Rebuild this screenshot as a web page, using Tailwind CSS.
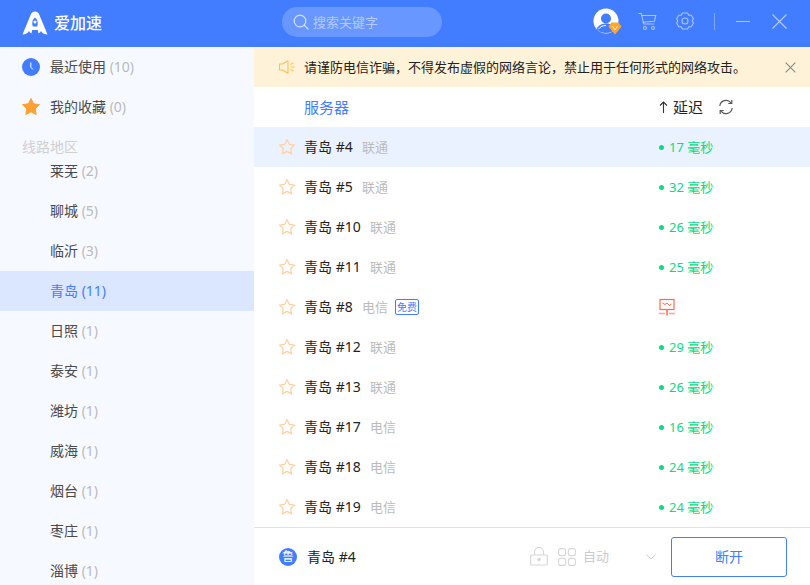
<!doctype html>
<html lang="zh"><head><meta charset="utf-8"><script src="https://cdn.jsdelivr.net/npm/@tailwindcss/browser@4"></script><title>爱加速</title></head>
<body class="w-[810px] h-[585px] overflow-hidden bg-white font-['Noto_Sans','Noto_Sans_CJK_SC',sans-serif] text-[14px] leading-none text-[#222]">
<svg class="hidden"><defs>
<symbol id="star" viewBox="0 0 18 18"><path d="M9 1.6l2.3 4.8 5.2.7-3.8 3.6.9 5.2L9 13.4l-4.6 2.5.9-5.2L1.500 7.100l5.200-.7z" fill="none" stroke="#ffd0a0" stroke-width="1.200" stroke-linejoin="round"/></symbol>
</defs></svg>
<header class="h-[47px] bg-[#437dff] flex items-center pb-[3px]">
  <div class="w-[282px] flex items-center pl-[22px] shrink-0 mt-[2px]">
    <svg width="26" height="24" viewBox="0 0 26 24"><path d="M13 .5c2 0 3.400 1 4.200 3L25.500 23.500c-2.500 0-5-.8-6.500-3.500-.5 1.200-1.500 2-2.500 2.300L15.800 19h-5.600l-.7 3.300c-1-.3-2-1.100-2.500-2.300-1.500 2.700-4 3.500-6.500 3.500L8.800 3.500C9.600 1.500 11 .5 13 .5z" fill="#fff"/><path d="M13 6.500c1.800 1.300 2.800 3.500 2.800 6.500l-.6 2.500h-4.400l-.6-2.500c0-3 1-5.200 2.800-6.500z" fill="#437dff"/><circle cx="13" cy="11" r="1.500" fill="#fff"/></svg>
    <span class="ml-[6px] text-[16px] font-medium text-white">爱加速</span>
  </div>
  <div class="w-[160px] h-[30px] rounded-full bg-white/20 flex items-center pl-[11px] shrink-0">
    <svg width="16" height="16" viewBox="0 0 16 16" fill="none" stroke="#fff" stroke-opacity=".7" stroke-width="1.200"><circle cx="7" cy="7" r="5.800"/><path d="M11.200 11.200l3.800 3.800" stroke-linecap="round"/></svg>
    <span class="ml-[4px] text-[13px] text-white/50">搜索关键字</span>
  </div>
  <div class="ml-[151px] w-[26px] h-[26px] relative shrink-0 -mt-[2px]">
    <svg width="26" height="26" viewBox="0 0 26 26"><circle cx="13" cy="13" r="12.500" fill="#fff"/><circle cx="13" cy="10.500" r="5" fill="#437dff"/><path d="M3.500 21c2-4 5.500-5.500 9.500-5.500s7.500 1.500 9.500 5.500c-2.300 2.600-5.600 4-9.500 4s-7.200-1.400-9.500-4z" fill="#437dff"/><path d="M5.500 21.300c1.700-2.700 4.300-3.800 7.500-3.800" stroke="#fff" fill="none"/></svg>
    <svg class="absolute left-[15px] top-[14px]" width="14" height="13" viewBox="0 0 14 13"><path d="M3.500.5h7l3 4-6.500 8-6.500-8z" fill="#ffa62b"/><path d="M4.500 4l2.500 4 2.500-4" fill="none" stroke="#fff" stroke-opacity=".7"/></svg>
  </div>
  <svg class="ml-[19px] shrink-0 -mt-[2px]" width="19" height="19" viewBox="0 0 19 19" fill="none" stroke="#fff" stroke-opacity=".55" stroke-width="1.100"><path d="M.5 1.500h2.800l2.400 10.500h10.600"/><path d="M3.800 3.500h14l-1.500 5.800-11.200 1"/><circle cx="7" cy="16" r="1.500"/><circle cx="15" cy="16" r="1.500"/></svg>
  <svg class="ml-[19px] shrink-0 -mt-[2px]" width="18" height="18" viewBox="0 0 18 18" fill="none" stroke="#fff" stroke-opacity=".55" stroke-width="1.100"><path d="M6.500 1h5l1.300 2.100 2.400.2 2.200 3.500-1.200 2.200 1.200 2.200-2.200 3.500-2.400.2L11.500 17h-5l-1.300-2.100-2.400-.2L.6 11.200l1.200-2.200L.6 6.800l2.200-3.500 2.400-.2z" stroke-linejoin="round"/><circle cx="9" cy="9" r="3"/></svg>
  <div class="ml-[20px] w-px h-[17px] bg-white/35 shrink-0 -mt-[2px]"></div>
  <div class="ml-[21px] w-[14px] h-px bg-white/55 shrink-0 -mt-[2px]"></div>
  <svg class="ml-[22px] shrink-0 -mt-[2px]" width="15" height="15" viewBox="0 0 15 15" stroke="#fff" stroke-opacity=".6" stroke-width="1.100"><path d="M.5.500l14 14M14.500.500l-14 14"/></svg>
</header>
<div class="flex h-[538px]">
  <aside class="w-[254px] shrink-0 bg-[#f6f9ff] flex flex-col overflow-hidden text-[#4a4a4a]">
    <div class="h-[40px] shrink-0 flex items-center pl-[22px]">
      <svg width="18" height="18" viewBox="0 0 18 18"><circle cx="9" cy="9" r="9" fill="#437dff"/><path d="M8.800 4.500v4.800l2 2" fill="none" stroke="#fff"/></svg>
      <span class="ml-[10px]">最近使用 <span class="text-[#bbb]">(10)</span></span>
    </div>
    <div class="h-[40px] shrink-0 flex items-center pl-[22px]">
      <svg width="18" height="18" viewBox="0 0 18 18"><path d="M9 .500l2.600 5.300 5.900.8-4.300 4.100 1 5.800L9 13.800l-5.200 2.700 1-5.800L.500 6.600l5.900-.8z" fill="#ffa033" stroke="#ffa033" stroke-linejoin="round"/></svg>
      <span class="ml-[10px]">我的收藏 <span class="text-[#bbb]">(0)</span></span>
    </div>
    <div class="h-[38px] shrink-0 flex items-center pl-[22px] pt-[2px] text-[#d0d0d0]">线路地区</div>
    <div class="flex-1 overflow-hidden">
      <div class="-mt-[14px]">
      <div class="h-[40px] flex items-center pl-[50px]">莱芜&nbsp;<span class="text-[#bbb]">(2)</span></div>
      <div class="h-[40px] flex items-center pl-[50px]">聊城&nbsp;<span class="text-[#bbb]">(5)</span></div>
      <div class="h-[40px] flex items-center pl-[50px]">临沂&nbsp;<span class="text-[#bbb]">(3)</span></div>
      <div class="h-[40px] flex items-center pl-[50px] bg-[#dbe6ff] text-[#437dff]">青岛&nbsp;<span>(11)</span></div>
      <div class="h-[40px] flex items-center pl-[50px]">日照&nbsp;<span class="text-[#bbb]">(1)</span></div>
      <div class="h-[40px] flex items-center pl-[50px]">泰安&nbsp;<span class="text-[#bbb]">(1)</span></div>
      <div class="h-[40px] flex items-center pl-[50px]">潍坊&nbsp;<span class="text-[#bbb]">(1)</span></div>
      <div class="h-[40px] flex items-center pl-[50px]">威海&nbsp;<span class="text-[#bbb]">(1)</span></div>
      <div class="h-[40px] flex items-center pl-[50px]">烟台&nbsp;<span class="text-[#bbb]">(1)</span></div>
      <div class="h-[40px] flex items-center pl-[50px]">枣庄&nbsp;<span class="text-[#bbb]">(1)</span></div>
      <div class="h-[40px] flex items-center pl-[50px]">淄博&nbsp;<span class="text-[#bbb]">(1)</span></div>
      </div>
    </div>
  </aside>
  <main class="flex-1 flex flex-col min-w-0">
    <div class="h-[40px] shrink-0 bg-[#fef2d8] flex items-center pl-[25px] text-[13px] text-[#222]">
      <svg width="16" height="14" viewBox="0 0 16 14" fill="none" stroke="#ffbf4d" stroke-width="1.100"><path d="M.5 4h3L9 .800v12.400L3.500 10h-3z" stroke-linejoin="round"/><path d="M11.500 4.500l3-1.500M12 7h3.500M11.500 9.500l3 1.500"/></svg>
      <span class="ml-[9px] w-[481px] shrink-0">请谨防电信诈骗，不得发布虚假的网络言论，禁止用于任何形式的网络攻击。</span>
      <svg width="11" height="11" viewBox="0 0 11 11" stroke="#888" stroke-width="1.100"><path d="M.7.700l9.600 9.600M10.300.700L.7 10.300"/></svg>
    </div>
    <div class="h-[40px] shrink-0 flex items-center text-[15px]">
      <span class="ml-[50px] w-[355px] text-[#437dff]">服务器</span>
      <svg width="9" height="12" viewBox="0 0 9 12" fill="none" stroke="#333" stroke-width="1.100"><path d="M4.500 12V1M1 4.500l3.500-3.500 3.500 3.500"/></svg>
      <span class="ml-[5px]">延迟</span>
      <svg class="ml-[15px]" width="16" height="16" viewBox="0 0 16 16" fill="none" stroke="#555" stroke-width="1.200"><path d="M1.800 7A6.300 6.300 0 0 1 13 3.800"/><path d="M14.200 9A6.300 6.300 0 0 1 3 12.200"/><path d="M13.800 1v3.500h-3.500M2.200 15v-3.500h3.500"/></svg>
    </div>
    <div class="flex-1 min-h-0 flex flex-col">
      <div class="h-[40px] flex items-center pl-[24px] bg-[#ebf2ff]"><svg width="18" height="18"><use href="#star"/></svg><span class="ml-[8px] w-[58px] whitespace-nowrap">青岛 #4</span><span class="text-[13px] text-[#bbb] w-[297px]">联通</span><i class="w-[5px] h-[5px] rounded-full bg-[#08dc84] mr-[5px]"></i><span class="text-[13px] pt-[1px] text-[#08dc84]">17 毫秒</span></div>
      <div class="h-[40px] flex items-center pl-[24px]"><svg width="18" height="18"><use href="#star"/></svg><span class="ml-[8px] w-[58px] whitespace-nowrap">青岛 #5</span><span class="text-[13px] text-[#bbb] w-[297px]">联通</span><i class="w-[5px] h-[5px] rounded-full bg-[#08dc84] mr-[5px]"></i><span class="text-[13px] pt-[1px] text-[#08dc84]">32 毫秒</span></div>
      <div class="h-[40px] flex items-center pl-[24px]"><svg width="18" height="18"><use href="#star"/></svg><span class="ml-[8px] w-[66px] whitespace-nowrap">青岛 #10</span><span class="text-[13px] text-[#bbb] w-[289px]">联通</span><i class="w-[5px] h-[5px] rounded-full bg-[#08dc84] mr-[5px]"></i><span class="text-[13px] pt-[1px] text-[#08dc84]">26 毫秒</span></div>
      <div class="h-[40px] flex items-center pl-[24px]"><svg width="18" height="18"><use href="#star"/></svg><span class="ml-[8px] w-[66px] whitespace-nowrap">青岛 #11</span><span class="text-[13px] text-[#bbb] w-[289px]">联通</span><i class="w-[5px] h-[5px] rounded-full bg-[#08dc84] mr-[5px]"></i><span class="text-[13px] pt-[1px] text-[#08dc84]">25 毫秒</span></div>
      <div class="h-[40px] flex items-center pl-[24px]"><svg width="18" height="18"><use href="#star"/></svg><span class="ml-[8px] w-[58px] whitespace-nowrap">青岛 #8</span><span class="text-[13px] text-[#bbb] w-[33px]">电信</span><span class="w-[24px] h-[16px] rounded-[2px] border border-[#437dff] text-[#437dff] text-[10px] flex items-center justify-center">免费</span><svg class="ml-[240px]" width="16" height="18" viewBox="0 0 16 18" fill="none"><rect x="1" y="1.500" width="14" height="10" stroke="#ff6a4d" stroke-width="1.200"/><path d="M3.500 5l2.500 1.500 2-1.500 2.500 2.500 2-1.500" stroke="#ff6a4d"/><path d="M8 11.500v6" stroke="#ff6a4d" stroke-width="1.500"/><path d="M0 15.500h6M10 15.500h6" stroke="#ffa594" stroke-width="1.500"/></svg></div>
      <div class="h-[40px] flex items-center pl-[24px]"><svg width="18" height="18"><use href="#star"/></svg><span class="ml-[8px] w-[66px] whitespace-nowrap">青岛 #12</span><span class="text-[13px] text-[#bbb] w-[289px]">联通</span><i class="w-[5px] h-[5px] rounded-full bg-[#08dc84] mr-[5px]"></i><span class="text-[13px] pt-[1px] text-[#08dc84]">29 毫秒</span></div>
      <div class="h-[40px] flex items-center pl-[24px]"><svg width="18" height="18"><use href="#star"/></svg><span class="ml-[8px] w-[66px] whitespace-nowrap">青岛 #13</span><span class="text-[13px] text-[#bbb] w-[289px]">联通</span><i class="w-[5px] h-[5px] rounded-full bg-[#08dc84] mr-[5px]"></i><span class="text-[13px] pt-[1px] text-[#08dc84]">26 毫秒</span></div>
      <div class="h-[40px] flex items-center pl-[24px]"><svg width="18" height="18"><use href="#star"/></svg><span class="ml-[8px] w-[66px] whitespace-nowrap">青岛 #17</span><span class="text-[13px] text-[#bbb] w-[289px]">电信</span><i class="w-[5px] h-[5px] rounded-full bg-[#08dc84] mr-[5px]"></i><span class="text-[13px] pt-[1px] text-[#08dc84]">16 毫秒</span></div>
      <div class="h-[40px] flex items-center pl-[24px]"><svg width="18" height="18"><use href="#star"/></svg><span class="ml-[8px] w-[66px] whitespace-nowrap">青岛 #18</span><span class="text-[13px] text-[#bbb] w-[289px]">电信</span><i class="w-[5px] h-[5px] rounded-full bg-[#08dc84] mr-[5px]"></i><span class="text-[13px] pt-[1px] text-[#08dc84]">24 毫秒</span></div>
      <div class="h-[40px] flex items-center pl-[24px]"><svg width="18" height="18"><use href="#star"/></svg><span class="ml-[8px] w-[66px] whitespace-nowrap">青岛 #19</span><span class="text-[13px] text-[#bbb] w-[289px]">电信</span><i class="w-[5px] h-[5px] rounded-full bg-[#08dc84] mr-[5px]"></i><span class="text-[13px] pt-[1px] text-[#08dc84]">24 毫秒</span></div>
    </div>
    <div class="h-[58px] shrink-0 border-t border-[#e2e2e2] flex items-center pl-[25px]">
      <span class="w-[18px] h-[18px] rounded-full bg-[#437dff] text-white text-[12px] flex items-center justify-center">鲁</span>
      <span class="ml-[10px] w-[223px] whitespace-nowrap text-[#222]">青岛 #4</span>
      <svg width="18" height="19" viewBox="0 0 18 19" fill="none" stroke="#d8d8d8" stroke-width="1.200"><path d="M4.500 8V5a4.500 4.500 0 0 1 9 0v3"/><rect x=".7" y="8" width="16.600" height="10" rx="1"/><circle cx="9" cy="12.500" r="1.200" fill="#d8d8d8"/></svg>
      <svg class="ml-[10px]" width="18" height="18" viewBox="0 0 18 18" fill="none" stroke="#d8d8d8" stroke-width="1.100"><rect x=".6" y=".6" width="7" height="7" rx="2"/><rect x="10.400" y=".6" width="7" height="7" rx="2"/><rect x=".6" y="10.400" width="7" height="7" rx="2"/><rect x="10.400" y="10.400" width="7" height="7" rx="2"/></svg>
      <span class="ml-[7px] text-[13px] w-[63px] text-[#ccc]">自动</span>
      <svg width="10" height="6" viewBox="0 0 10 6" fill="none" stroke="#ccc"><path d="M.5.500L5 5 9.500.500"/></svg>
      <button class="ml-[15px] w-[116px] h-[40px] rounded-[3px] border border-[#437dff] text-[#437dff] text-[14px]">断开</button>
    </div>
  </main>
</div>
</body></html>
